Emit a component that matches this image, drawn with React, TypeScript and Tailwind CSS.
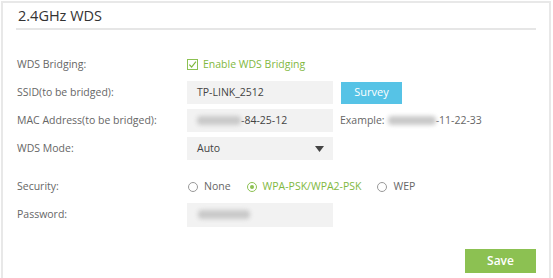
import React from "react";

const font = { fontFamily: '"Open Sans", "Liberation Sans", sans-serif' };

function Row({ label, children, className = "" }: { label: string; children: React.ReactNode; className?: string }) {
  return (
    <div className={`flex items-center h-[23px] ${className}`}>
      <div className="w-[170px] shrink-0 text-[10.5px] font-medium text-[#666]">{label}</div>
      <div className="flex items-center">{children}</div>
    </div>
  );
}

function Blur({ w }: { w: number }) {
  return (
    <span
      className="inline-block h-[9px] rounded-sm bg-[#c9c9c9] blur-[2px]"
      style={{ width: w }}
    />
  );
}

function Radio({ checked, label }: { checked?: boolean; label: string }) {
  return (
    <label className="flex items-center gap-[6px] mr-[16px]">
      <span
        className={`w-[10px] h-[10px] rounded-full border flex items-center justify-center ${
          checked ? "border-[#8cc152]" : "border-[#999]"
        }`}
      >
        {checked && <span className="w-[4px] h-[4px] rounded-full bg-[#8cc152]" />}
      </span>
      <span className={`text-[10.5px] font-medium ${checked ? "text-[#7fb83e]" : "text-[#666]"}`}>{label}</span>
    </label>
  );
}

export default function App() {
  return (
    <div className="w-[553px] h-[278px] bg-white overflow-hidden pt-[1px] pl-[1px]" style={font}>
      <div className="w-[550px] h-[290px] border-2 border-b-0 border-[#e8e8e8]">
        {/* Title */}
        <div className="ml-[13px] w-[520px] h-[27px] border-b-2 border-[#e6e6e6] pl-[2px] pt-[4px]">
          <h2 className="text-[14.5px] leading-[18px] text-[#333]">2.4GHz WDS</h2>
        </div>

        <div className="pl-[14px] pt-[23px]">
          <Row label="WDS Bridging:">
            <div className="flex items-center gap-[5px]">
              <span className="w-[11px] h-[11px] border border-[#8cc152] flex items-center justify-center">
                <svg width="9" height="9" viewBox="0 0 10 10" fill="none">
                  <path d="M1.5 5.2 L4 7.8 L8.8 1.8" stroke="#7fb83e" strokeWidth="1.3" />
                </svg>
              </span>
              <span className="text-[10.5px] font-medium text-[#7fb83e]">Enable WDS Bridging</span>
            </div>
          </Row>

          <Row label="SSID(to be bridged):" className="mt-[5px]">
            <div className="w-[146px] h-[23px] bg-[#f2f2f2] px-[10px] flex items-center text-[10.5px] font-medium text-[#444]">
              TP-LINK_2512
            </div>
            <button className="ml-[8px] w-[61px] h-[22px] bg-[#56c3e6] text-white text-[11px] font-medium">
              Survey
            </button>
          </Row>

          <Row label="MAC Address(to be bridged):" className="mt-[5px]">
            <div className="w-[146px] h-[23px] bg-[#f2f2f2] pl-[10px] flex items-center text-[10.5px] font-medium text-[#444]">
              <Blur w={44} />
              <span>-84-25-12</span>
            </div>
            <div className="ml-[7px] flex items-center text-[10.5px] font-medium text-[#666]">
              <span className="mr-[3px]">Example:</span>
              <Blur w={48} />
              <span>-11-22-33</span>
            </div>
          </Row>

          <Row label="WDS Mode:" className="mt-[5px]">
            <div className="w-[146px] h-[23px] bg-[#f2f2f2] pl-[10px] pr-[9px] flex items-center justify-between text-[10.5px] font-medium text-[#444]">
              <span>Auto</span>
              <svg width="9" height="6" viewBox="0 0 9 6">
                <path d="M0 0 H9 L4.5 6 Z" fill="#444" />
              </svg>
            </div>
          </Row>

          <Row label="Security:" className="mt-[15px]">
            <div className="flex items-center pl-[1px]">
              <Radio label="None" />
              <Radio checked label="WPA-PSK/WPA2-PSK" />
              <Radio label="WEP" />
            </div>
          </Row>

          <Row label="Password:" className="mt-[5px]">
            <div className="w-[146px] h-[24px] bg-[#f2f2f2] pl-[11px] flex items-center">
              <Blur w={52} />
            </div>
          </Row>
        </div>

        <div className="flex justify-end pr-[13px] mt-[23px]">
          <button className="w-[71px] h-[24px] bg-[#8cc152] text-white text-[12px] font-semibold">Save</button>
        </div>
      </div>
    </div>
  );
}
